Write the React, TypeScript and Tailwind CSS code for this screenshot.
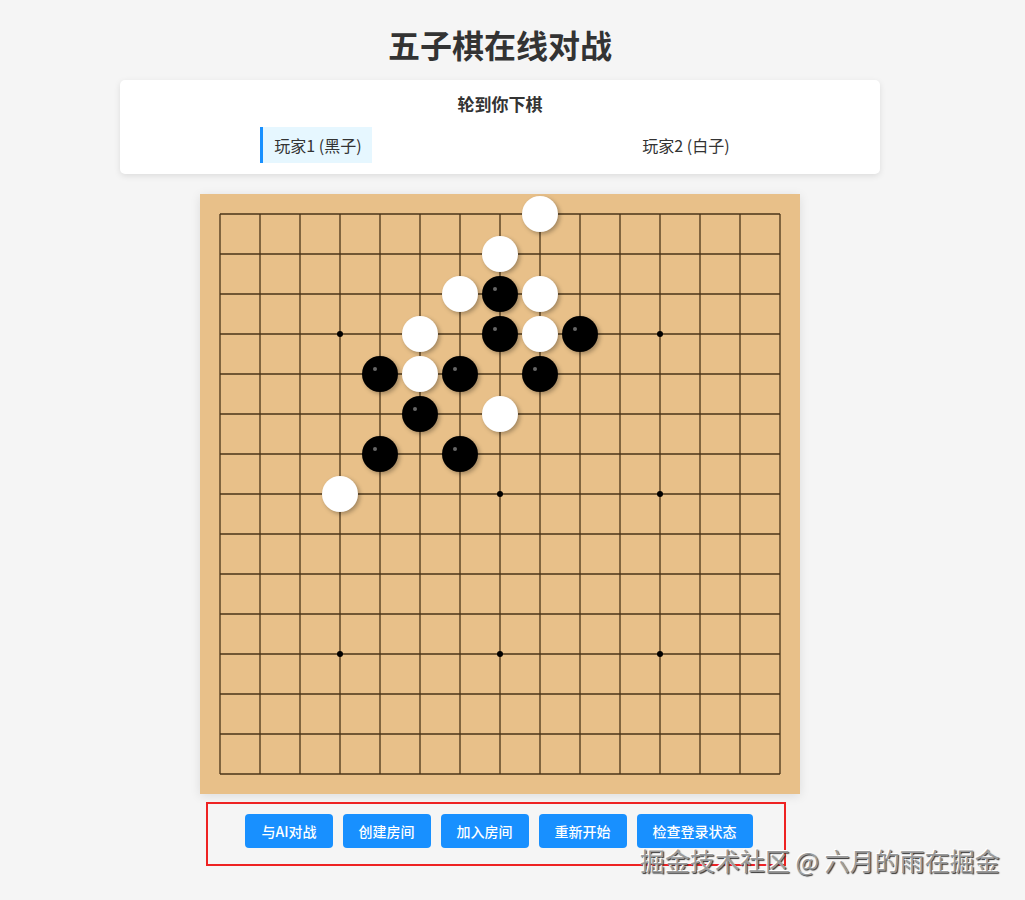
import React from 'react';

type Stone = { c: number; r: number; color: 'black' | 'white' };

const stones: Stone[] = [
  { c: 8, r: 0, color: 'white' },
  { c: 7, r: 1, color: 'white' },
  { c: 6, r: 2, color: 'white' },
  { c: 7, r: 2, color: 'black' },
  { c: 8, r: 2, color: 'white' },
  { c: 5, r: 3, color: 'white' },
  { c: 7, r: 3, color: 'black' },
  { c: 8, r: 3, color: 'white' },
  { c: 9, r: 3, color: 'black' },
  { c: 4, r: 4, color: 'black' },
  { c: 5, r: 4, color: 'white' },
  { c: 6, r: 4, color: 'black' },
  { c: 8, r: 4, color: 'black' },
  { c: 5, r: 5, color: 'black' },
  { c: 7, r: 5, color: 'white' },
  { c: 4, r: 6, color: 'black' },
  { c: 6, r: 6, color: 'black' },
  { c: 3, r: 7, color: 'white' },
];

const stars = [3, 7, 11].flatMap((r) => [3, 7, 11].map((c) => ({ c, r })));

const CELL = 40;
const SIZE = 15;

const Board = () => {
  const span = CELL * (SIZE - 1);
  return (
    <div className="bg-[#e8c089] p-5 shadow-[0_2px_10px_rgba(0,0,0,0.1)]">
      <div className="relative w-[560px] h-[560px]">
        <svg width={span + 2} height={span + 2} className="absolute -left-px -top-px">
          {Array.from({ length: SIZE }).map((_, i) => (
            <g key={i}>
              <line x1={1} y1={1 + i * CELL} x2={1 + span} y2={1 + i * CELL} stroke="#4a3418" strokeWidth={1.3} />
              <line x1={1 + i * CELL} y1={1} x2={1 + i * CELL} y2={1 + span} stroke="#4a3418" strokeWidth={1.3} />
            </g>
          ))}
          {stars.map((s) => (
            <circle key={`${s.c}-${s.r}`} cx={1 + s.c * CELL} cy={1 + s.r * CELL} r={3} fill="#000" />
          ))}
        </svg>
        {stones.map((s) => (
          <div
            key={`${s.c}-${s.r}`}
            className={
              s.color === 'black'
                ? 'absolute w-[36px] h-[36px] -ml-[18px] -mt-[18px] rounded-full bg-black shadow-[2px_2px_4px_rgba(0,0,0,0.3)]'
                : 'absolute w-[36px] h-[36px] -ml-[18px] -mt-[18px] rounded-full bg-white shadow-[2px_2px_4px_rgba(0,0,0,0.3)]'
            }
            style={{ left: s.c * CELL, top: s.r * CELL }}
          >
            {s.color === 'black' && (
              <div className="absolute left-[11px] top-[11px] w-[4px] h-[4px] rounded-full bg-[#666]" />
            )}
          </div>
        ))}
      </div>
    </div>
  );
};

const buttons = ['与AI对战', '创建房间', '加入房间', '重新开始', '检查登录状态'];

export default function App() {
  return (
    <div
      className="min-h-[900px] bg-[#f5f5f5] relative overflow-hidden text-[#333]"
      style={{ fontFamily: '"Noto Sans CJK SC", "Noto Sans", sans-serif' }}
    >
      <div className="w-[1000px] flex flex-col items-center">
        <h1 className="mt-[24px] mb-[16px] text-[32px] leading-[40px] font-bold text-[#333]">五子棋在线对战</h1>

        <div className="w-[760px] bg-white rounded-[5px] shadow-[0_2px_6px_rgba(0,0,0,0.1)] px-[15px] pt-[14px] pb-[11px]">
          <div className="text-center text-[17px] leading-[20px] font-bold">轮到你下棋</div>
          <div className="mt-[13px] flex justify-around">
            <div className="h-[36px] flex items-center border-l-[3px] border-[#1890ff] bg-[#e6f7ff] pl-[11px] pr-[10px] text-[16px] mr-[6px]">
              玩家1 (黑子)
            </div>
            <div className="h-[36px] flex items-center px-[10px] text-[16px] ml-[4px]">玩家2 (白子)</div>
          </div>
        </div>

        <div className="mt-[20px]">
          <Board />
        </div>

        <div className="mt-[8px] mr-[8px] w-[580px] border-2 border-[#ee2222] pt-[10px] pb-[16px] flex justify-center gap-[10px] pl-[6px]">
          {buttons.map((b) => (
            <button
              key={b}
              className="h-[34px] px-4 rounded-[4px] bg-[#1890ff] text-white text-[14px] font-medium"
            >
              {b}
            </button>
          ))}
        </div>
      </div>

      <div
        className="absolute left-[640px] top-[843px] text-[25px] leading-[34px] text-[#9a9a9a] whitespace-nowrap [text-shadow:-1px_-1px_0_#fff,1px_1px_1px_#333]"
      >
        掘金技术社区 @ 六月的雨在掘金
      </div>
    </div>
  );
}
